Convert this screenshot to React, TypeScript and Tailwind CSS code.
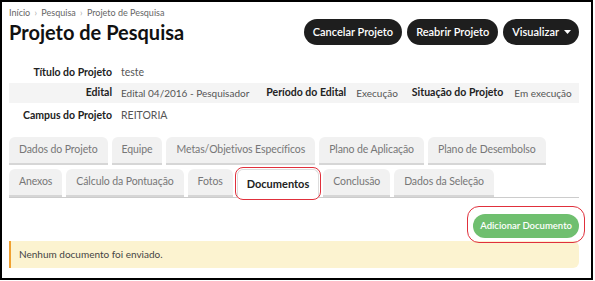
import React from "react";

const rowOne = ["Dados do Projeto", "Equipe", "Metas/Objetivos Específicos", "Plano de Aplicação", "Plano de Desembolso"];
const rowTwo = ["Anexos", "Cálculo da Pontuação", "Fotos", "Documentos", "Conclusão", "Dados da Seleção"];

function Tab({ label, active }: { label: string; active?: boolean }) {
  if (active) {
    return (
      <div className="relative -mb-px shrink-0">
        <div className="flex h-[29px] items-center whitespace-nowrap rounded-t-md border border-b-0 border-[#ddd] bg-white px-[9px] text-[11px] font-bold text-[#222]">
          {label}
        </div>
        <div className="pointer-events-none absolute -inset-x-[2px] -top-[2px] bottom-[-2px] rounded-lg border-[1.5px] border-[#e0303c]" />
      </div>
    );
  }
  return (
    <div className="flex h-[28px] shrink-0 items-center whitespace-nowrap rounded-t-md border-b-2 border-[#d6d6d6] bg-[#f1f1f1] px-[10px] text-[10.5px] tracking-[-0.1px] text-[#777]">
      {label}
    </div>
  );
}

export default function App() {
  return (
    <div className="h-[281px] w-[595px] bg-white font-['Lato','Noto_Sans',sans-serif]">
      <div className="h-[280px] w-[593px] border-2 border-black pl-[7px] pr-[12px]">
        <header className="flex items-start justify-between">
          <div>
            <p className="mt-[4px] whitespace-nowrap text-[9px] text-[#666]">
              Início <span className="mx-[2px] text-[#aaa]">›</span> Pesquisa <span className="mx-[2px] text-[#aaa]">›</span> Projeto de Pesquisa
            </p>
            <h1 className="whitespace-nowrap text-[20px] font-bold leading-[25px] text-[#111]">Projeto de Pesquisa</h1>
          </div>
          <div className="mt-[17px] flex gap-[5px]">
            <button className="h-[26px] whitespace-nowrap rounded-full bg-[#1e1e1e] px-[9px] text-[11px] font-semibold text-white">Cancelar Projeto</button>
            <button className="h-[26px] whitespace-nowrap rounded-full bg-[#1e1e1e] px-[9px] text-[11px] font-semibold text-white">Reabrir Projeto</button>
            <button className="flex h-[26px] items-center gap-[5px] whitespace-nowrap rounded-full bg-[#1e1e1e] pl-[9px] pr-[8px] text-[11px] font-semibold text-white">
              Visualizar
              <svg width="7" height="4" viewBox="0 0 7 4" aria-hidden="true">
                <path d="M0 0h7L3.5 4z" fill="white" />
              </svg>
            </button>
          </div>
        </header>

        <section className="mt-[17px] whitespace-nowrap text-[10.5px]">
          <div className="flex h-[21px] items-center">
            <span className="w-[103px] shrink-0 text-right font-bold text-[#222]">Título do Projeto</span>
            <span className="ml-[9px] text-[#555]">teste</span>
          </div>
          <div className="flex h-[20px] items-center bg-[#f4f4f4]">
            <span className="w-[103px] shrink-0 text-right font-bold text-[#222]">Edital</span>
            <span className="ml-[9px] text-[10px] text-[#555]">Edital 04/2016 - Pesquisador</span>
            <span className="ml-[17px] font-bold text-[#222]">Período do Edital</span>
            <span className="ml-[10px] text-[10px] text-[#555]">Execução</span>
            <span className="ml-[14px] font-bold text-[#222]">Situação do Projeto</span>
            <span className="ml-[11px] text-[10px] text-[#555]">Em execução</span>
          </div>
          <div className="flex h-[25px] items-center">
            <span className="w-[103px] shrink-0 text-right font-bold text-[#222]">Campus do Projeto</span>
            <span className="ml-[9px] text-[#555]">REITORIA</span>
          </div>
        </section>

        <nav className="mt-[9px]">
          <div className="flex gap-[4px]">
            {rowOne.map((t) => (
              <Tab key={t} label={t} />
            ))}
          </div>
          <div className="mt-[4px] flex items-end gap-[4px] border-b border-[#ccc]">
            {rowTwo.map((t) => (
              <Tab key={t} label={t} active={t === "Documentos"} />
            ))}
          </div>
        </nav>

        <div className="mt-[13px] flex justify-end">
          <div className="relative">
            <button className="h-[24px] whitespace-nowrap rounded-full bg-[#6fbf6f] px-[7px] text-[9.5px] font-semibold text-white">Adicionar Documento</button>
            <div className="pointer-events-none absolute -inset-x-[6px] -inset-y-[5px] rounded-xl border-[1.5px] border-[#e0303c]" />
          </div>
        </div>

        <div className="mt-[3px] flex h-[27px] items-center rounded-r-md border-l-2 border-[#f0a030] bg-[#fcf3d0] pl-[8px] text-[10px] text-[#444]">
          Nenhum documento foi enviado.
        </div>
      </div>
    </div>
  );
}
